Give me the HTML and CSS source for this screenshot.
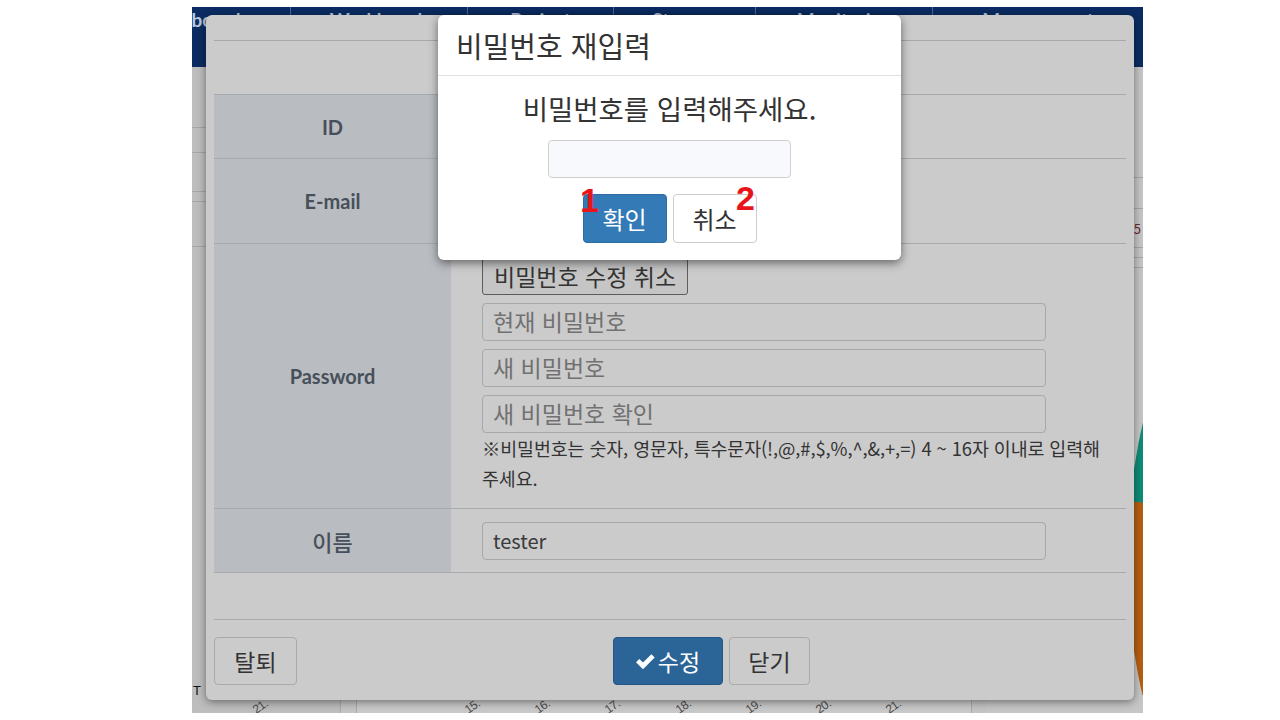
FILE: index.html
```html
<!DOCTYPE html>
<html lang="ko">
<head>
<meta charset="utf-8">
<title>비밀번호 재입력</title>
<link rel="stylesheet" href="styles.css">
</head>
<body>
<div class="screen">
  <div class="app">
    <nav class="topnav">
      <div class="nav-item">Main board</div>
      <div class="nav-item">Workbench</div>
      <div class="nav-item">Project</div>
      <div class="nav-item">Storage</div>
      <div class="nav-item">Monitoring</div>
      <div class="nav-item">Management</div>
    </nav>
    <div class="app-body">
      <aside class="side-left">
        <div class="bg-row r1"></div>
        <div class="bg-row r2"></div>
        <div class="bg-row r3"></div>
        <div class="bg-row r4"></div>
        <div class="bg-row r5"></div>
        <div class="side-fill"></div>
        <div class="side-t">T</div>
        <div class="axis"><span class="tick">21.</span></div>
      </aside>
      <section class="center">
        <div class="center-fill"></div>
        <div class="axis axis-main">
          <span class="tick">15.</span><span class="tick">16.</span><span class="tick">17.</span><span class="tick">18.</span><span class="tick">19.</span><span class="tick">20.</span><span class="tick">21.</span>
        </div>
      </section>
      <aside class="side-right">
        <div class="bg-row q1"></div>
        <div class="bg-row q2"></div>
        <div class="bg-row q3"><span class="mini">5</span></div>
        <div class="bg-row q4"></div>
        <div class="bg-row q5"></div>
        <div class="pie"></div>
      </aside>
    </div>
  </div>

  <div class="modal">
    <div class="modal-header"></div>
    <div class="modal-body">
      <div class="form-table">
        <div class="form-row row-id">
          <div class="label-cell">ID</div>
          <div class="value-cell">tester</div>
        </div>
        <div class="form-row row-mail">
          <div class="label-cell">E-mail</div>
          <div class="value-cell">tester@test.com</div>
        </div>
        <div class="form-row row-pw">
          <div class="label-cell">Password</div>
          <div class="value-cell value-pw">
            <button class="btn-pwcancel" type="button">비밀번호 수정 취소</button>
            <input class="field" type="password" placeholder="현재 비밀번호">
            <input class="field" type="password" placeholder="새 비밀번호">
            <input class="field" type="password" placeholder="새 비밀번호 확인">
            <p class="note">※비밀번호는 숫자, 영문자, 특수문자(!,@,#,$,%,^,&amp;,+,=) 4 ~ 16자 이내로 입력해 주세요.</p>
          </div>
        </div>
        <div class="form-row row-name">
          <div class="label-cell label-ko">이름</div>
          <div class="value-cell">
            <input class="field" type="text" value="tester">
          </div>
        </div>
      </div>
    </div>
    <div class="modal-footer">
      <button class="btn btn-leave" type="button">탈퇴</button>
      <div class="footer-center">
        <button class="btn btn-save" type="button"><svg class="ok-icon" width="19" height="17" viewBox="0 0 19 17"><polygon points="0,9.2 3.3,5.9 7,9.6 15.4,1.2 18.7,4.5 7,16.2" fill="#fff"/></svg>수정</button>
        <button class="btn btn-close" type="button">닫기</button>
      </div>
    </div>
  </div>

  <div class="dialog">
    <div class="dialog-header">비밀번호 재입력</div>
    <div class="dialog-body">
      <p class="dialog-msg">비밀번호를 입력해주세요.</p>
      <input class="dialog-input" type="password">
      <div class="dialog-actions">
        <button class="dbtn dbtn-ok" type="button">확인</button>
        <button class="dbtn dbtn-cancel" type="button">취소</button>
      </div>
    </div>
    <span class="mark mark-1">1</span>
    <span class="mark mark-2">2</span>
  </div>
</div>
</body>
</html>
```

FILE: styles.css
```css
* { box-sizing: border-box; }

html, body {
  margin: 0;
  padding: 0;
  background: #ffffff;
}

body {
  font-family: "Noto Sans CJK KR", "Noto Sans", sans-serif;
  color: #333;
}

.screen {
  position: relative;
  width: 951px;
  height: 706px;
  margin: 7px 0 0 192px;
  overflow: hidden;
  background: #c4c4c4;
}

/* ---------- background application (dimmed) ---------- */
.app {
  display: flex;
  flex-direction: column;
  height: 100%;
}

.topnav {
  display: flex;
  height: 60px;
  background: #0b2c62;
  flex: none;
}

.nav-item {
  height: 100%;
  padding-top: 2px;
  border-right: 1px solid #4e6791;
  color: #b9c6dc;
  font-family: "Lato", sans-serif;
  font-weight: 700;
  font-size: 19px;
  line-height: 22px;
  text-align: center;
  white-space: nowrap;
  overflow: hidden;
}
.nav-item:nth-child(1) { width: 99px; text-align: left; padding-left: 0; text-indent: -48px; }
.nav-item:nth-child(2) { width: 177px; }
.nav-item:nth-child(3) { width: 146px; }
.nav-item:nth-child(4) { width: 142px; }
.nav-item:nth-child(5) { width: 177px; }
.nav-item:nth-child(6) { flex: 1; border-right: none; }

.app-body {
  flex: 1;
  display: grid;
  grid-template-columns: 149px 1fr 156px;
  column-gap: 15px;
  background: #c4c4c4;
}

.side-left, .side-right, .center {
  display: flex;
  flex-direction: column;
  position: relative;
}

.side-left { background: #bdbdbd; border-right: 1px solid #a9a9a9; }
.center { border-left: 1px solid #a9a9a9; border-right: 1px solid #a9a9a9; background: #c9c9c9; }
.side-right { background: #c6c6c6; overflow: hidden; }

.bg-row { border-bottom: 1px solid #a6a6a6; flex: none; }
.r1 { height: 61px; }
.r2 { height: 25px; }
.r3 { height: 39px; }
.r4 { height: 10px; }
.r5 { height: 45px; }
.q1 { height: 111px; }
.q2 { height: 31px; }
.q3 { height: 39px; position: relative; }
.q4 { height: 10px; }
.q5 { height: 10px; }

.mini {
  position: absolute;
  right: 2px;
  top: 10px;
  font-size: 13px;
  color: #6b2a2a;
}

.side-fill, .center-fill { flex: 1; }

.side-t {
  font-family: "Liberation Sans", sans-serif;
  font-size: 13px;
  line-height: 13px;
  color: #111;
  padding-left: 1px;
  margin-bottom: 2px;
}

.axis {
  height: 14px;
  position: relative;
  font-family: "Liberation Sans", sans-serif;
  font-size: 12px;
  color: #4a4a4a;
}
.side-left .axis { padding-left: 58px; }
.axis-main {
  display: flex;
  padding-left: 105px;
  gap: 55px;
}
.tick {
  display: inline-block;
  transform: rotate(-35deg);
  transform-origin: left top;
  margin-top: 6px;
  letter-spacing: -0.5px;
}

.pie {
  position: absolute;
  left: 140px;
  top: -107px;
  width: 1200px;
  height: 1200px;
  border-radius: 50%;
  background: conic-gradient(#c6c6c6 0deg 257deg, #b65f12 257deg 275.6deg, #0f8c78 275.6deg 284deg, #c6c6c6 284deg 360deg);
}

/* ---------- main modal (dimmed) ---------- */
.modal {
  position: absolute;
  left: 14px;
  top: 8px;
  width: 928px;
  height: 685px;
  padding: 0 8px;
  background: #cbcbcb;
  border-radius: 6px;
  box-shadow: 0 2px 8px rgba(0, 0, 0, 0.45);
  display: flex;
  flex-direction: column;
}

.modal-header {
  height: 26px;
  border-bottom: 1px solid #a6a9ad;
  flex: none;
}

.modal-body {
  padding-top: 53px;
  flex: none;
}

.form-table {
  border-top: 1px solid #a6a9ad;
  border-bottom: 1px solid #a6a9ad;
}

.form-row {
  display: flex;
}
.form-row + .form-row { border-top: 1px solid #a6a9ad; }
.row-id { height: 63px; }
.row-mail { height: 85px; }
.row-pw { height: 265px; }
.row-name { height: 64px; }

.label-cell {
  width: 237px;
  flex: none;
  background: #b9bcc1;
  display: flex;
  align-items: center;
  justify-content: center;
  font-family: "Lato", sans-serif;
  font-weight: 700;
  font-size: 20px;
  color: #47505a;
}
.label-ko {
  font-family: "Noto Sans CJK KR", sans-serif;
  font-weight: 500;
  font-size: 22px;
}

.value-cell {
  flex: 1;
  padding: 0 14px 0 31px;
  display: flex;
  flex-direction: column;
  justify-content: center;
  font-size: 20px;
  color: #333;
}

.value-pw {
  justify-content: flex-start;
  padding-top: 14px;
}

.btn-pwcancel {
  align-self: flex-start;
  height: 37px;
  padding: 0 11px;
  background: #c5c5c5;
  border: 1px solid #5c5c5c;
  border-radius: 3px;
  font-family: "Noto Sans CJK KR", sans-serif;
  font-size: 23px;
  color: #333;
  line-height: 1;
}

.field {
  display: block;
  width: 564px;
  height: 38px;
  margin-top: 8px;
  padding: 0 10px;
  background: #cbcbcb;
  border: 1px solid #a8a8a8;
  border-radius: 4px;
  font-family: "Noto Sans CJK KR", sans-serif;
  font-size: 20px;
  color: #3a3a3a;
  outline: none;
}
.field::placeholder { color: #717171; font-size: 23px; }
.row-name .field { margin-top: 0; }

.note {
  margin: 0;
  font-size: 18.4px;
  line-height: 30px;
  letter-spacing: -0.1px;
  word-break: keep-all;
  color: #333;
}

.modal-footer {
  margin-top: 46px;
  border-top: 1px solid #a6a9ad;
  padding-top: 17px;
  display: flex;
  align-items: flex-start;
}

.footer-center {
  flex: 1;
  display: flex;
  justify-content: center;
  gap: 6px;
}

.btn {
  height: 48px;
  border-radius: 4px;
  border: 1px solid #a9a9a9;
  background: #cbcbcb;
  font-family: "Noto Sans CJK KR", sans-serif;
  font-size: 23px;
  color: #333;
  padding: 0;
  display: inline-flex;
  align-items: center;
  justify-content: center;
}
.btn-leave { width: 83px; }
.btn-save {
  width: 110px;
  background: #2b6597;
  border-color: #245585;
  color: #fff;
  gap: 3px;
}
.btn-close { width: 81px; }
.ok-icon { margin-top: 1px; }

/* ---------- password confirm dialog ---------- */
.dialog {
  position: absolute;
  left: 246px;
  top: 8px;
  width: 463px;
  height: 245px;
  background: #ffffff;
  border-radius: 6px;
  box-shadow: 0 3px 10px rgba(0, 0, 0, 0.5);
}

.dialog-header {
  height: 61px;
  padding-left: 18px;
  border-bottom: 1px solid #dce1e6;
  display: flex;
  align-items: center;
  font-size: 29px;
  color: #333;
}

.dialog-body {
  display: flex;
  flex-direction: column;
  align-items: center;
  padding-top: 14px;
}

.dialog-msg {
  margin: 0;
  font-size: 27.5px;
  line-height: 36px;
  color: #333;
}

.dialog-input {
  width: 243px;
  height: 38px;
  margin-top: 14px;
  border: 1px solid #cfcfcf;
  border-radius: 4px;
  background: #f8f9fc;
  outline: none;
}

.dialog-actions {
  display: flex;
  gap: 6px;
  margin-top: 16px;
}

.dbtn {
  width: 84px;
  height: 49px;
  border-radius: 4px;
  font-family: "Noto Sans CJK KR", sans-serif;
  font-size: 24px;
  padding: 0;
}
.dbtn-ok {
  background: #337ab7;
  border: 1px solid #2e6da4;
  color: #fff;
}
.dbtn-cancel {
  background: #fff;
  border: 1px solid #cccccc;
  color: #333;
}

.mark {
  position: absolute;
  font-family: "Liberation Sans", sans-serif;
  font-weight: 700;
  font-size: 34px;
  line-height: 34px;
  color: #e8141a;
}
.mark-1 { left: 142px; top: 168px; }
.mark-2 { left: 298px; top: 166px; }
```
